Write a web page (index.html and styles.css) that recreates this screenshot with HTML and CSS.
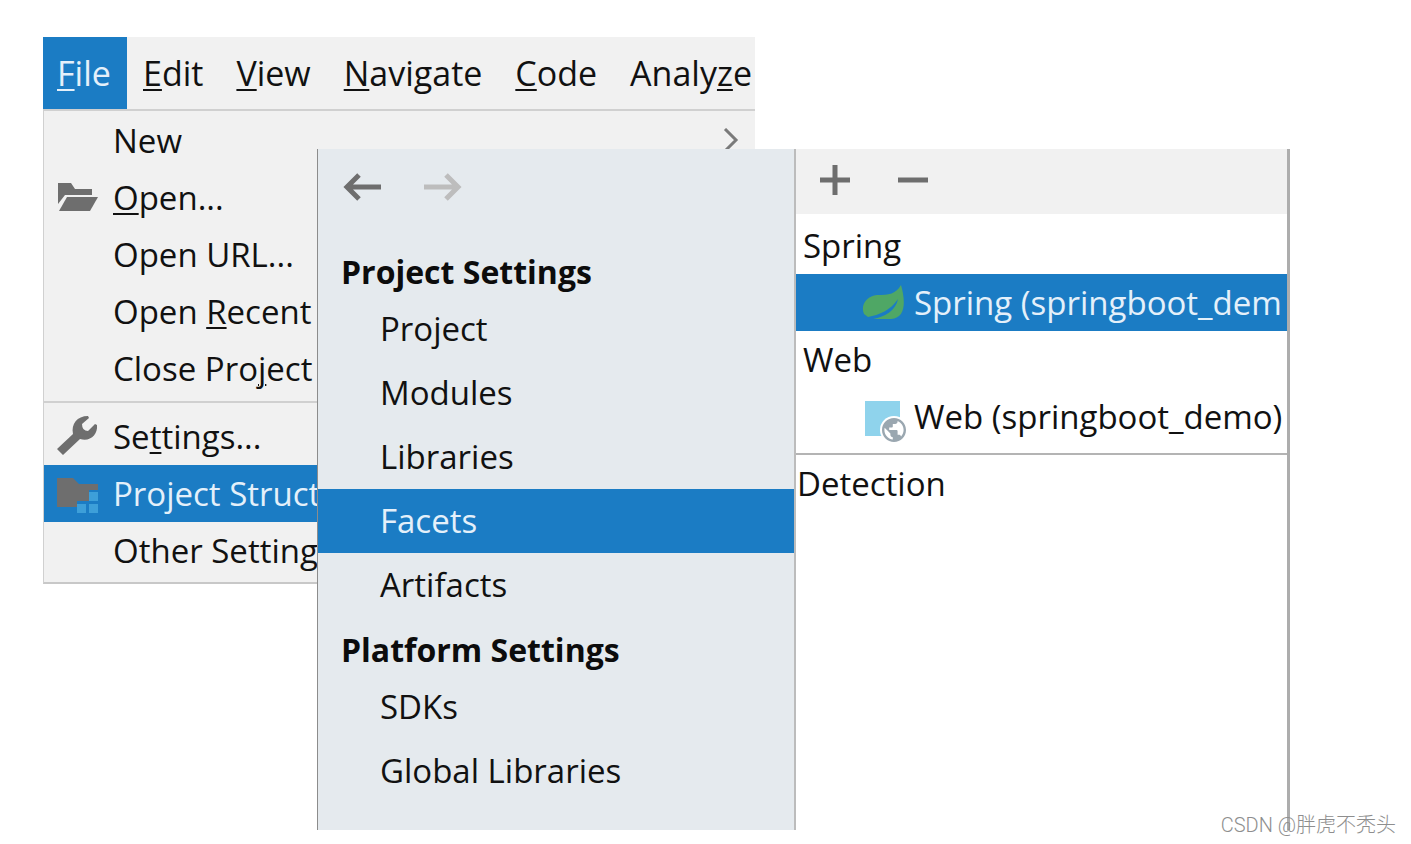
FILE: index.html
```html
<!DOCTYPE html>
<html lang="en">
<head>
<meta charset="utf-8">
<title>Project Structure</title>
<link rel="stylesheet" href="styles.css">
</head>
<body>
<main class="stage">
  <section class="menu">
    <nav class="menubar" aria-label="Main menu">
      <button class="menubar-item active"><u>F</u>ile</button>
      <div class="menubar-rest">
        <button class="menubar-item"><u>E</u>dit</button>
        <button class="menubar-item"><u>V</u>iew</button>
        <button class="menubar-item"><u>N</u>avigate</button>
        <button class="menubar-item"><u>C</u>ode</button>
        <button class="menubar-item">Analy<u>z</u>e</button>
      </div>
    </nav>
    <div class="dropdown">
      <button class="entry"><span class="entry-icon"></span><span>New</span>
        <svg class="chevron" width="16" height="26" viewBox="0 0 16 26"><path d="M2 1l11 11L2 23" fill="none" stroke="#7a7a7a" stroke-width="3"/></svg>
      </button>
      <button class="entry"><span class="entry-icon">
        <svg width="42" height="32" viewBox="0 0 42 32"><path d="M1 1h13l4 6h17v6H8L1 22z" fill="#6e6e6e"/><path d="M10 15h31l-8 14H2z" fill="#6e6e6e"/></svg>
      </span><span><u>O</u>pen...</span></button>
      <button class="entry"><span class="entry-icon"></span><span>Open URL...</span></button>
      <button class="entry"><span class="entry-icon"></span><span>Open <u>R</u>ecent</span></button>
      <button class="entry"><span class="entry-icon"></span><span>Close Pro<u>j</u>ect</span></button>
      <hr class="separator">
      <button class="entry"><span class="entry-icon">
        <svg width="42" height="42" viewBox="0 0 42 42"><path d="M0 33L16 18C14 8 20 0 31 0L32 2L25 8Q25 15 31 15L38 8L40 9C41 19 33 26 23 23L6 39z" fill="#6e6e6e"/></svg>
      </span><span>Se<u>t</u>tings...</span></button>
      <button class="entry selected"><span class="entry-icon">
        <svg width="42" height="38" viewBox="0 0 42 38"><path d="M0 3h16l6 6h19v6h-9v11H20v6H0z" fill="#6e6e6e"/><path d="M32 17h9v9h-9zM20 29h9v9h-9zM32 29h9v9h-9z" fill="#3d9fd9"/></svg>
      </span><span>Project Struct</span></button>
      <button class="entry"><span class="entry-icon"></span><span>Other Setting</span></button>
    </div>
  </section>

  <section class="dialog">
    <nav class="sidebar" aria-label="Project structure sections">
      <div class="history">
        <button class="tool" aria-label="Back"><svg width="40" height="30" viewBox="0 0 40 30"><path d="M38 15H4M16 3L4 15l12 12" fill="none" stroke="#6e6e6e" stroke-width="5"/></svg></button>
        <button class="tool" aria-label="Forward"><svg width="40" height="30" viewBox="0 0 40 30"><path d="M0 15h34M22 3l12 12-12 12" fill="none" stroke="#bdbdbd" stroke-width="5"/></svg></button>
      </div>
      <h2 class="group">Project Settings</h2>
      <button class="section">Project</button>
      <button class="section">Modules</button>
      <button class="section">Libraries</button>
      <button class="section selected">Facets</button>
      <button class="section">Artifacts</button>
      <h2 class="group">Platform Settings</h2>
      <button class="section">SDKs</button>
      <button class="section">Global Libraries</button>
    </nav>
    <div class="facets">
      <div class="toolbar">
        <button class="tool" aria-label="Add"><svg width="30" height="30" viewBox="0 0 30 30"><path d="M0 15h30M15 0v30" stroke="#6e6e6e" stroke-width="5"/></svg></button>
        <button class="tool" aria-label="Remove"><svg width="30" height="30" viewBox="0 0 30 30"><path d="M0 15h30" stroke="#6e6e6e" stroke-width="5"/></svg></button>
      </div>
      <div class="tree">
        <button class="node">Spring</button>
        <button class="node child selected">
          <svg class="node-icon" width="44" height="36" viewBox="0 0 44 36"><path d="M2 29C-2 20 5 11 15 10C27 10 34 9 39 0C43 14 45 33 29 34H11C23 32 34 25 36 14C29 25 17 30 6 32z" fill="#4fa765"/></svg>
          <span>Spring (springboot_dem</span></button>
        <button class="node">Web</button>
        <button class="node child">
          <svg class="node-icon" width="44" height="50" viewBox="0 0 44 50"><path d="M3 9h35v35H3z" fill="#8fd3ec"/><circle cx="32" cy="38" r="14" fill="#fff"/><path transform="translate(17.600 23.600) scale(1.200)" d="M12 2C6.480 2 2 6.480 2 12s4.480 10 10 10 10-4.480 10-10S17.520 2 12 2zm-1 17.930c-3.950-.490-7-3.850-7-7.930 0-.620.080-1.210.210-1.790L9 15v1c0 1.100.900 2 2 2v1.930zm6.900-2.540c-.260-.810-1-1.390-1.900-1.390h-1v-3c0-.550-.450-1-1-1H8v-2h2c.550 0 1-.450 1-1V7h2c1.100 0 2-.900 2-2v-.410c2.930 1.190 5 4.060 5 7.410 0 2.080-.800 3.970-2.100 5.390z" fill="#9aa7b0"/></svg>
          <span>Web (springboot_demo)</span></button>
      </div>
      <button class="node detection">Detection</button>
    </div>
  </section>
</main>
<footer class="credit">CSDN @胖虎不秃头</footer>
</body>
</html>
```
FILE: styles.css
```css
* {
  box-sizing: border-box;
}

body {
  margin: 0;
  min-height: 100vh;
  position: relative;
  background: #fff;
  color: #111;
  font: 33px/40px "Open Sans", "Noto Sans", sans-serif;
}

button {
  margin: 0;
  padding: 0;
  border: 0;
  background: none;
  color: inherit;
  font: inherit;
  text-align: left;
  white-space: nowrap;
}

svg {
  display: block;
  flex: none;
}

u {
  text-decoration-thickness: 2px;
  text-underline-offset: 3px;
}

.stage {
  display: grid;
  grid-template-columns: 274px 438px minmax(0, 1fr);
  padding: 37px 121px 13px 43px;
}

.menu {
  grid-area: 1 / 1 / 2 / 3;
  align-self: start;
  background: #f1f1f1;
}

.menubar {
  display: flex;
  height: 74px;
  border-bottom: 2px solid #d0d0d0;
  font-size: 34px;
}

.menubar-item.active {
  width: 84px;
  padding-left: 14px;
}

.menubar-rest {
  flex: 1;
  display: flex;
  justify-content: space-between;
  padding: 0 3px 0 16px;
}

.active,
.selected {
  background: #1b7cc4;
  color: #e4f0fa;
}

.dropdown {
  display: flex;
  flex-direction: column;
  padding: 1px 0 3px;
  border-left: 1px solid #d0d0d0;
  border-bottom: 2px solid #c8c8c8;
}

.entry {
  display: flex;
  align-items: center;
  height: 57px;
}

.entry-icon {
  flex: none;
  width: 69px;
  padding-left: 13px;
}

.chevron {
  margin-left: auto;
  margin-right: 16px;
}

.separator {
  width: 100%;
  margin: 4px 0 5px;
  border: 0;
  border-top: 2px solid #d0d0d0;
}

.dialog {
  grid-area: 1 / 2 / 2 / 4;
  display: grid;
  grid-template-columns: 478px minmax(0, 1fr);
  margin-top: 112px;
  border-left: 1px solid #8c8c8c;
  border-right: 3px solid #adadad;
  background: #fff;
  z-index: 1;
}

.sidebar {
  display: flex;
  flex-direction: column;
  padding-bottom: 27px;
  border-right: 2px solid #bcbcbc;
  background: #e5eaee;
}

.history {
  display: flex;
  align-items: flex-start;
  gap: 41px;
  height: 90px;
  padding: 23px 25px;
}

.group {
  height: 58px;
  margin: 0;
  padding: 13px 23px 0;
  color: #0c0c0c;
  font-size: 32px;
  line-height: 40px;
}

.section {
  height: 64px;
  padding-left: 62px;
}

.toolbar {
  display: flex;
  align-items: flex-start;
  gap: 48px;
  height: 65px;
  padding: 16px 24px;
  background: #f1f1f1;
}

.tree {
  display: flex;
  flex-direction: column;
  padding: 3px 0 8px;
  border-bottom: 2px solid #b4b4b4;
}

.node {
  display: flex;
  align-items: center;
  height: 57px;
  padding-left: 7px;
}

.node.child {
  gap: 8px;
  padding-left: 66px;
}

.node.detection {
  padding-left: 1px;
}

.credit {
  position: absolute;
  right: 15px;
  bottom: 7px;
  z-index: 2;
  color: #8e8e8e;
  font: 20px/24px Roboto, "Noto Sans CJK SC", sans-serif;
  font-weight: 300;
}
```
